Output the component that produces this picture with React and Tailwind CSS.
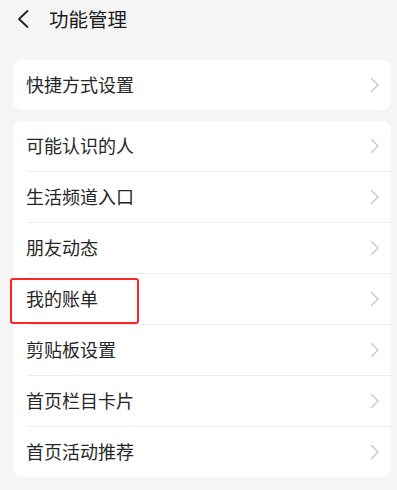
import React from 'react';

const font = { fontFamily: '"Noto Sans CJK SC", "Noto Sans", sans-serif' };

const Chevron = () => (
  <svg width="10" height="16" viewBox="0 0 10 16" className="shrink-0">
    <path d="M1.5 1.5 L8 8 L1.5 14.5" fill="none" stroke="#c4c4c4" strokeWidth="1.3" strokeLinecap="round" strokeLinejoin="round" />
  </svg>
);

const Row = ({ label, divider, marked }) => (
  <div className="relative">
    {divider && <div className="ml-[15px] h-px bg-[#ececec]" />}
    <div className="h-[50px] flex items-center justify-between pl-[13px] pr-[11px]">
      <span className="text-[18px] text-[#262626] leading-none pb-[2px]">{label}</span>
      <Chevron />
    </div>
    {marked && (
      <div className="absolute left-[-3px] top-[5px] w-[129px] h-[46px] border-2 border-[#ff2424] rounded-[3px]" />
    )}
  </div>
);

const items = ['可能认识的人', '生活频道入口', '朋友动态', '我的账单', '剪贴板设置', '首页栏目卡片', '首页活动推荐'];

export default function App() {
  return (
    <div className="w-[397px] h-[490px] bg-[#f5f5f5] overflow-hidden" style={font}>
      <div className="h-[37px] flex items-center">
        <svg width="14" height="20" viewBox="0 0 14 20" className="ml-[16px]">
          <path d="M11.5 2 L3 10 L11.5 18" fill="none" stroke="#222" strokeWidth="1.8" strokeLinecap="round" strokeLinejoin="round" />
        </svg>
        <span className="ml-[19px] text-[19.5px] text-[#1a1a1a] leading-none">功能管理</span>
      </div>
      <div className="pl-[13px] pr-[6px] pt-[23px] flex flex-col gap-[11px]">
        <div className="bg-white rounded-[9px]">
          <Row label="快捷方式设置" />
        </div>
        <div className="bg-white rounded-[9px]">
          {items.map((t, i) => (
            <Row key={t} label={t} divider={i > 0} marked={t === '我的账单'} />
          ))}
        </div>
      </div>
    </div>
  );
}
